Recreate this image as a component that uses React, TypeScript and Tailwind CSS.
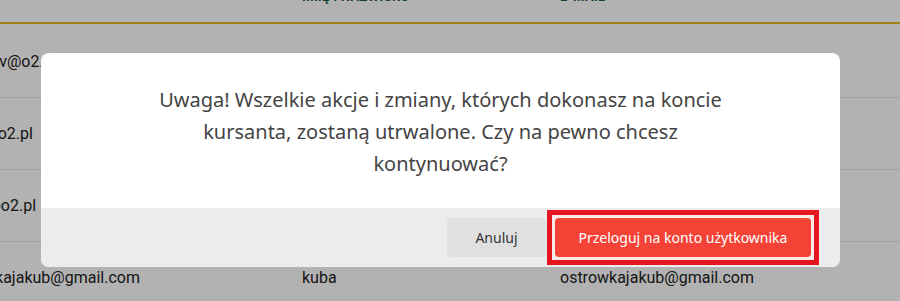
import { ChevronDown } from 'lucide-react';

/* ---------- DANE ---------- */
const rows = [
  { login: 'tomaszv@o2.pl', name: 'tomasz', email: 'tomaszv@o2.pl' },
  { login: 'ewak@o2.pl', name: 'ewa', email: 'ewak@o2.pl' },
  { login: 'adam@o2.pl', name: 'adam', email: 'adam@o2.pl' },
  { login: 'ostrowkajakub@gmail.com', name: 'kuba', email: 'ostrowkajakub@gmail.com' },
];

/* ---------- TABELA W TLE ---------- */
const HeaderCell = ({ label }: { label: string }) => (
  <div className="flex items-center gap-2 text-[13px] font-bold uppercase text-[#1d5a4c] tracking-wide">
    <span>{label}</span>
    <ChevronDown className="w-3.5 h-3.5 text-gray-400" strokeWidth={1.5} />
  </div>
);

const Table = () => (
  <div className="w-full bg-white font-['Roboto',sans-serif] text-[#222]">
    <div className="h-[24px] border-b-2 border-[#e9b824] overflow-hidden">
      <div className="grid grid-cols-[302px_258px_1fr] -mt-[13px] h-[20px] items-center">
        <div className="pl-1">
          <ChevronDown className="w-3.5 h-3.5 text-gray-400" strokeWidth={1.5} />
        </div>
        <HeaderCell label="Imię i nazwisko" />
        <HeaderCell label="E-mail" />
      </div>
    </div>
    <div className="h-[2px]" />
    {rows.map((r) => (
      <div
        key={r.login}
        className="grid grid-cols-[302px_258px_1fr] h-[72px] items-center border-b border-gray-200 text-base"
      >
        {/* tabela przewinięta w poziomie */}
        <div className="whitespace-nowrap overflow-hidden">
          <span className="block -ml-[54px]">{r.login}</span>
        </div>
        <div>{r.name}</div>
        <div>{r.email}</div>
      </div>
    ))}
  </div>
);

/* ---------- MODAL ---------- */
const ConfirmModal = () => (
  <div className="absolute left-[41px] top-[53px] w-[799px] rounded-lg overflow-hidden bg-white font-['Noto_Sans',sans-serif]">
    <div className="pt-[31px] pb-[28px] px-8 flex justify-center">
      <p className="max-w-[575px] text-center text-[20px] leading-[32px] text-[#444]">
        Uwaga! Wszelkie akcje i zmiany, których dokonasz na koncie kursanta, zostaną utrwalone. Czy na pewno chcesz kontynuować?
      </p>
    </div>
    <div className="bg-[#ececec] h-[59px] flex items-center justify-end gap-px pr-[21px]">
      <button className="h-[39px] w-[99px] rounded bg-[#e0e0e0] text-sm text-[#333]">Anuluj</button>
      {/* zaznaczenie przycisku */}
      <div className="border-[5px] border-[#e3161f] bg-[#fbeaea] p-[3px]">
        <button className="block h-[39px] w-[256px] rounded bg-[#f44336] text-sm text-white">
          Przeloguj na konto użytkownika
        </button>
      </div>
    </div>
  </div>
);

export default function App() {
  return (
    <div className="relative w-[900px] h-[301px] overflow-hidden bg-white">
      <Table />
      <div className="absolute inset-0 bg-black/30" />
      <ConfirmModal />
    </div>
  );
}
